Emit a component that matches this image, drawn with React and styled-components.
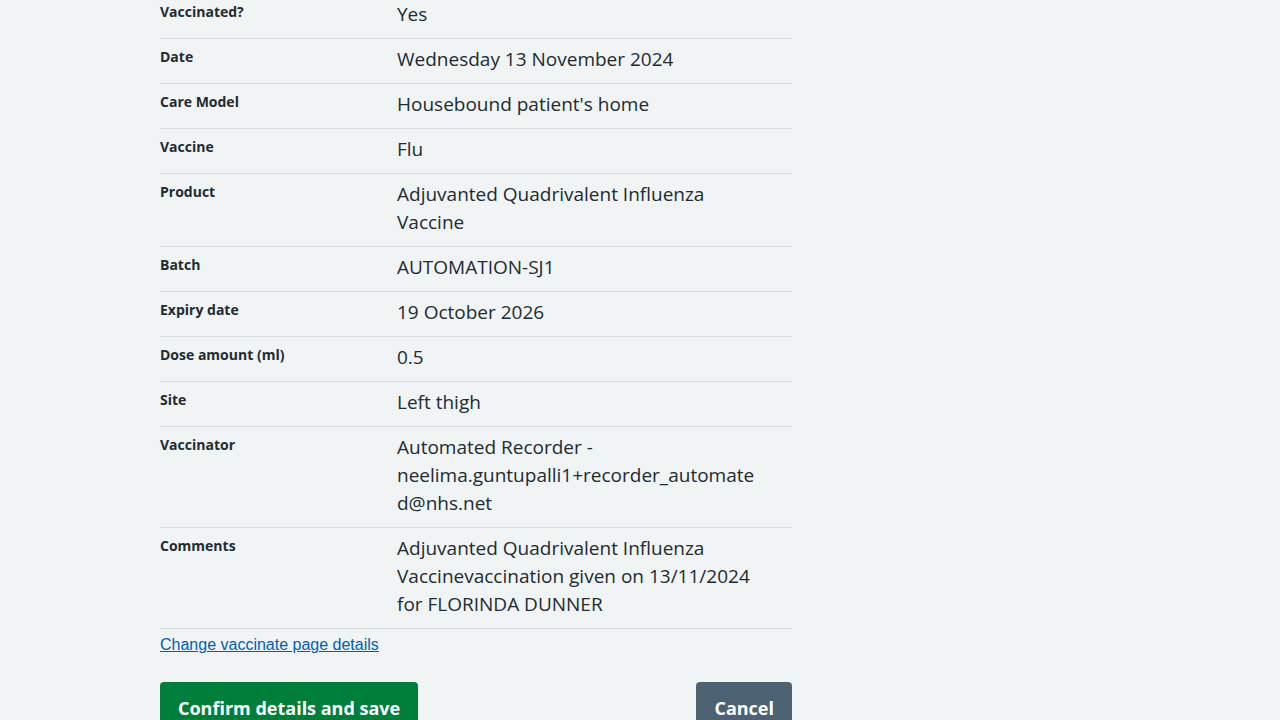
import React from "react";
import styled, { createGlobalStyle } from "styled-components";

const GlobalStyle = createGlobalStyle`
  * {
    box-sizing: border-box;
    margin: 0;
    padding: 0;
  }
  body {
    background: #f0f4f5;
    color: #212b32;
    font-family: "Open Sans", "Noto Sans", sans-serif;
    overflow: hidden;
  }
`;

const Page = styled.main`
  width: 632px;
  margin: -6px 0 0 160px;
`;

const SummaryList = styled.dl`
  display: flex;
  flex-direction: column;
`;

const Row = styled.div`
  display: grid;
  grid-template-columns: 237px 1fr;
  border-bottom: 1px solid #d8dde0;
  padding: 6px 0 10px;
`;

const Key = styled.dt`
  font-size: 14px;
  font-weight: 700;
  line-height: 24px;
`;

const Value = styled.dd`
  font-size: 19px;
  line-height: 28px;
  padding-right: 32px;
  overflow-wrap: anywhere;
`;

const ChangeLink = styled.a`
  display: inline-block;
  margin-top: 6px;
  font-family: "Liberation Sans", Arial, sans-serif;
  font-size: 16px;
  line-height: 20px;
  color: #005eb8;
  text-decoration: underline;
`;

const Actions = styled.div`
  display: flex;
  justify-content: space-between;
  margin-top: 27px;
`;

const Button = styled.button`
  border: 0;
  border-radius: 4px;
  padding: 12px 18px;
  font-family: "Open Sans", "Noto Sans", sans-serif;
  font-size: 18px;
  font-weight: 700;
  line-height: 28px;
  color: #ffffff;
  background: ${(p) => (p.$secondary ? "#4c6272" : "#007f3b")};
  box-shadow: 0 4px 0 ${(p) => (p.$secondary ? "#263139" : "#00401e")};
  cursor: pointer;
`;

const rows = [
  ["Vaccinated?", "Yes"],
  ["Date", "Wednesday 13 November 2024"],
  ["Care Model", "Housebound patient's home"],
  ["Vaccine", "Flu"],
  ["Product", "Adjuvanted Quadrivalent Influenza Vaccine"],
  ["Batch", "AUTOMATION-SJ1"],
  ["Expiry date", "19 October 2026"],
  ["Dose amount (ml)", "0.5"],
  ["Site", "Left thigh"],
  ["Vaccinator", "Automated Recorder - neelima.guntupalli1+recorder_automated@nhs.net"],
  [
    "Comments",
    "Adjuvanted Quadrivalent Influenza Vaccinevaccination given on 13/11/2024 for FLORINDA DUNNER",
  ],
];

const App = () => {
  return (
    <>
      <GlobalStyle />
      <Page>
        <SummaryList>
          {rows.map(([k, v]) => (
            <Row key={k}>
              <Key>{k}</Key>
              <Value>{v}</Value>
            </Row>
          ))}
        </SummaryList>
        <ChangeLink href="#">Change vaccinate page details</ChangeLink>
        <Actions>
          <Button>Confirm details and save</Button>
          <Button $secondary>Cancel</Button>
        </Actions>
      </Page>
    </>
  );
};

export default App;
